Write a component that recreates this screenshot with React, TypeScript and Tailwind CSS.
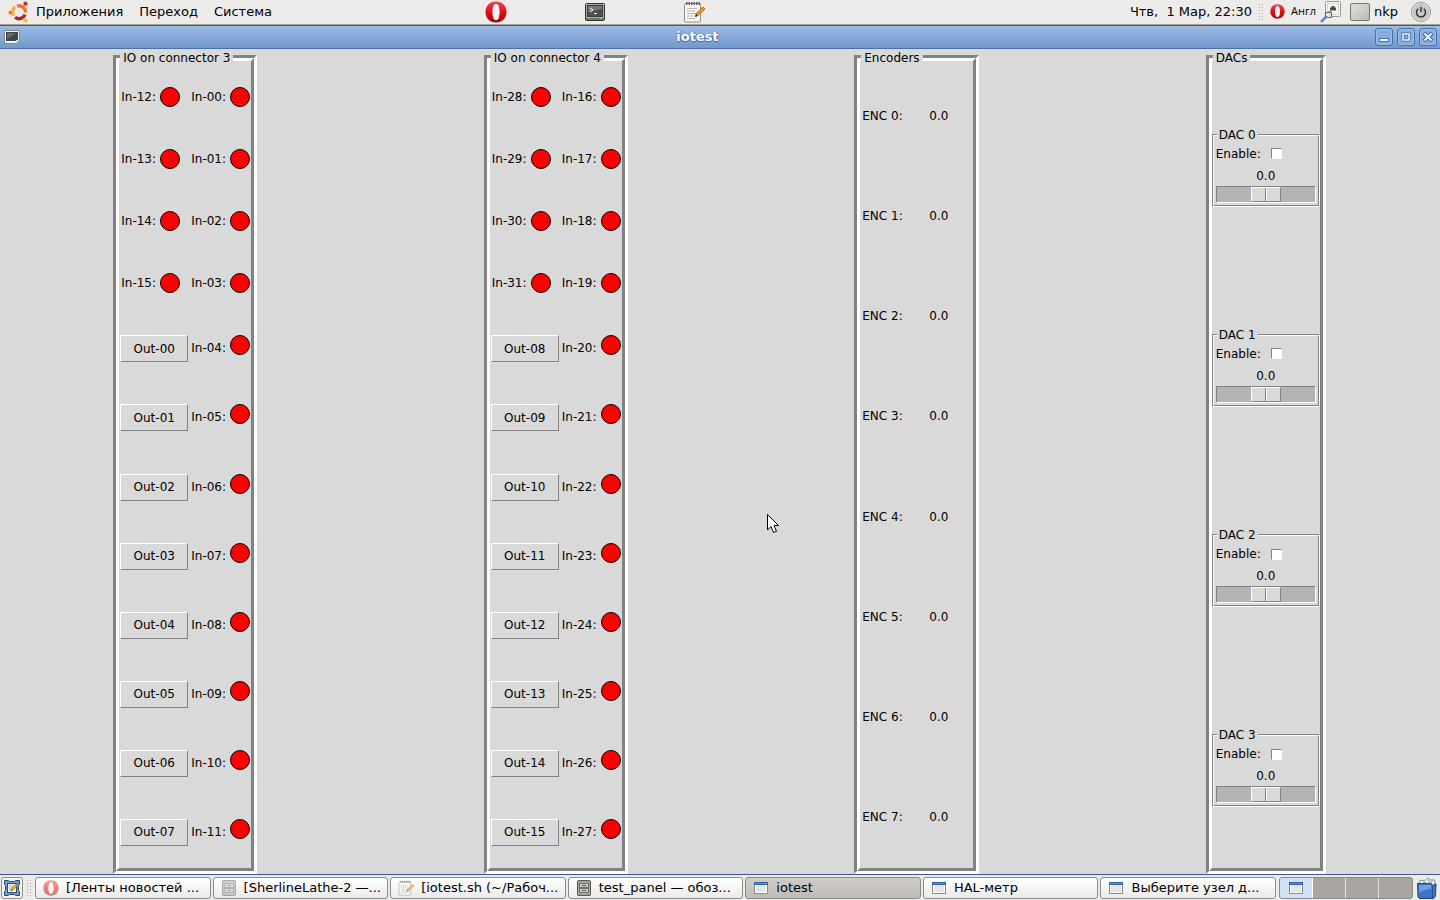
import type { ReactNode } from "react";

interface OutRow {
  out: string;
  input: string;
}

interface Connector {
  title: string;
  inputs: [string, string][];
  rows: OutRow[];
}

interface Task {
  label: string;
  icon: ReactNode;
  active?: boolean;
}

const pad = (n: number) => String(n).padStart(2, "0");

// each connector has 16 inputs and 8 outputs
const makeConnector = (title: string, inBase: number, outBase: number): Connector => ({
  title,
  inputs: [0, 1, 2, 3].map((i) => [`In-${pad(inBase + 12 + i)}`, `In-${pad(inBase + i)}`]),
  rows: [0, 1, 2, 3, 4, 5, 6, 7].map((i) => ({
    out: `Out-${pad(outBase + i)}`,
    input: `In-${pad(inBase + 4 + i)}`,
  })),
});

const CONNECTORS = [
  makeConnector("IO on connector 3", 0, 0),
  makeConnector("IO on connector 4", 16, 8),
];

/* ── Icons ── */

const UbuntuIcon = () => (
  <svg width="22" height="22" viewBox="0 0 22 22" fill="none" aria-hidden="true">
    <path d="M5.5 14.5A6.3 6.3 0 0 1 7 6.2" stroke="#f2ab2e" strokeWidth="3.4" />
    <path d="M9 5.2A6.3 6.3 0 0 1 17.5 11.5" stroke="#e8732c" strokeWidth="3.4" />
    <path d="M17 13.5A6.3 6.3 0 0 1 7 16.2" stroke="#b5242c" strokeWidth="3.4" />
    <circle cx="2.6" cy="11.6" r="2.2" fill="#e8732c" stroke="#f9c9a5" />
    <circle cx="17.4" cy="2.8" r="2.2" fill="#b5242c" stroke="#e3a3a3" />
    <circle cx="17.4" cy="19.4" r="2.2" fill="#f2b53a" stroke="#f7deb0" />
  </svg>
);

const OperaIcon = ({ size, faded }: { size: number; faded?: boolean }) => (
  <svg width={size} height={size} viewBox="0 0 22 22" opacity={faded ? 0.5 : 1} aria-hidden="true">
    <defs>
      <linearGradient id="opera" x1="0" y1="0" x2="0" y2="1">
        <stop offset="0" stopColor="#f0474a" />
        <stop offset="0.5" stopColor="#e30d15" />
        <stop offset="1" stopColor="#9d0a0f" />
      </linearGradient>
    </defs>
    <path
      d="M11 0.5C4.6 0.5 0.5 5 0.5 11S4.6 21.5 11 21.5 21.5 17 21.5 11 17.4 0.500 11 0.500ZM11 3C13.600 3 14.400 6.500 14.400 11S13.600 19 11 19 7.600 15.500 7.600 11 8.400 3 11 3Z"
      fill="url(#opera)"
      fillRule="evenodd"
    />
    <ellipse cx="11" cy="11" rx="3.4" ry="8" fill="#f6f4f3" />
  </svg>
);

const TerminalIcon = () => (
  <svg width="22" height="22" viewBox="0 0 22 22" fill="none" aria-hidden="true">
    <rect x="1.5" y="2.5" width="19" height="17" rx="1.5" fill="#3a3f40" stroke="#2e3436" />
    <rect x="2.5" y="3.5" width="17" height="13" stroke="#a9aca7" />
    <rect x="4" y="5" width="14" height="10" fill="#4a5051" />
    <path d="M4 5h14v3L4 11z" fill="#727877" />
    <path d="M6 7l3 2-3 2M10 12.5h3" stroke="#fff" />
    <path d="M2 18h18" stroke="#6c716d" strokeWidth="2" />
    <path d="M4 17.5h2M16 17.5h2" stroke="#8bd13c" />
  </svg>
);

const NotesIcon = ({ size, faded }: { size: number; faded?: boolean }) => (
  <svg width={size} height={size} viewBox="0 0 22 22" fill="none" opacity={faded ? 0.6 : 1} aria-hidden="true">
    <rect x="1.5" y="2.5" width="16" height="18.5" rx="1" fill="#f8f8f6" stroke="#8e908b" />
    <path d="M3 2.5h14" stroke="#60625e" strokeWidth="3" strokeDasharray="1.5 1" />
    <path d="M4 7.5h10M4 10h8M4 12.5h9M4 15h6M4 17.5h8" stroke="#b4b6b1" />
    <path d="M12.5 15.5l1-3.500 6.500-6 2 2-6.500 6z" fill="#f7941d" stroke="#b25b08" strokeWidth="0.8" />
    <path d="M12 16l1-3 2 2z" fill="#3b2b17" />
  </svg>
);

const CabinetIcon = ({ faded }: { faded?: boolean }) => (
  <svg width="16" height="18" viewBox="0 0 16 18" fill="none" opacity={faded ? 0.5 : 1} aria-hidden="true">
    <rect x="1.5" y="1.5" width="13" height="15" rx="1.5" fill="#a5a8a2" stroke="#555753" />
    <rect x="3.5" y="4.5" width="9" height="4" fill="#c9cbc6" stroke="#6c6e6a" />
    <rect x="3.5" y="9.5" width="9" height="4" fill="#c9cbc6" stroke="#6c6e6a" />
    <path d="M6 6.5h4M6 11.5h4" stroke="#5a5c58" />
  </svg>
);

const WindowIcon = () => (
  <svg width="14" height="12" viewBox="0 0 14 12" fill="none" aria-hidden="true">
    <rect x="0.5" y="0.5" width="13" height="11" fill="#e4e6e1" stroke="#8b8e88" />
    <rect x="1.5" y="2.5" width="11" height="8" stroke="#fff" />
    <rect width="14" height="3" fill="#2f63ab" />
    <path d="M1 1.5h12" stroke="#5d8ed0" />
  </svg>
);

const NetworkIcon = () => (
  <svg width="22" height="22" viewBox="0 0 22 22" fill="none" aria-hidden="true">
    <rect x="5.5" y="0.5" width="15" height="15" rx="1" fill="#f4f4f2" stroke="#9a9c97" />
    <rect x="7.5" y="2.5" width="11" height="11" stroke="#d5d6d2" />
    <path d="M10 9.5v-3h1.500V5h3v1.500H16v3z" fill="#4c4d35" />
    <path d="M1 21l6-6" stroke="#7ba3d6" strokeWidth="3" />
    <path d="M1 21l6-6" stroke="#3465a4" />
    <path d="M5.5 11.5h6v5h-3l-3-1z" fill="#e4e5e2" stroke="#5c5e5a" />
    <path d="M8 11l3-1.500v3" stroke="#888a85" />
  </svg>
);

const PowerIcon = () => (
  <svg width="22" height="22" viewBox="0 0 22 22" fill="none" aria-hidden="true">
    <circle cx="11" cy="11" r="9.5" fill="#ededeb" stroke="#8b8d88" />
    <circle cx="11" cy="11" r="7.5" fill="#c9cac7" stroke="#babbb7" />
    <path d="M8.3 7.8a4.5 4.5 0 1 0 5.4 0M11 6v5" stroke="#2c2e2b" strokeWidth="1.4" />
  </svg>
);

const DesktopIcon = () => (
  <svg width="18" height="18" viewBox="0 0 18 18" fill="none" aria-hidden="true">
    <path d="M1.5 1.5h4l1 1h5l1-1h4v4l-1 1v5l1 1v4h-4l-1-1h-5l-1 1h-4v-4l1-1v-5l-1-1z" fill="#6f9bd1" stroke="#204a87" />
    <rect x="4.5" y="4.5" width="9" height="9" fill="#f3f3ef" stroke="#3c4f63" />
    <path d="M6 7h4M6 9h3M6 11h3" stroke="#b4b6b1" />
    <path d="M8 12l1-3 4-4 1.5 1.5-4 4z" fill="#f5b52a" stroke="#8f5a08" strokeWidth="0.7" />
  </svg>
);

const TrashIcon = () => (
  <svg width="20" height="22" viewBox="0 0 20 22" fill="none" aria-hidden="true">
    <path d="M1.5 7l2-4 4 1 3-3 3 2h4l1 5z" fill="#eceeec" stroke="#7e8a96" />
    <path d="M6 5l3 1M11 3l2 3M15 4l-1 3" stroke="#8c959d" />
    <path d="M0.5 6.5h13l2 2 3.5-1.500-0.500 12-2 2.500h-14L1 20z" fill="#3a76c4" stroke="#1d4684" />
    <path d="M2 8h12v4c-4 0-8 1-11.500 4z" fill="#6e9fdc" />
    <path d="M15.5 9v12" stroke="#265396" />
  </svg>
);

const TASKS: Task[] = [
  { label: "[Ленты новостей ...", icon: <OperaIcon size={16} faded /> },
  { label: "[SherlineLathe-2 —...", icon: <CabinetIcon faded /> },
  { label: "[iotest.sh (~/Рабоч...", icon: <NotesIcon size={16} faded /> },
  { label: "test_panel — обоз...", icon: <CabinetIcon /> },
  { label: "iotest", icon: <WindowIcon />, active: true },
  { label: "HAL-метр", icon: <WindowIcon /> },
  { label: "Выберите узел д...", icon: <WindowIcon /> },
];

/* ── Panel widgets ── */

const Grip = () => (
  <span className="w-[6px] h-[18px] shrink-0 bg-[radial-gradient(#aaa8a5_1px,transparent_1px)] bg-[size:3px_3px]" />
);

const Led = () => (
  <svg width="20" height="20" viewBox="0 0 20 20" className="shrink-0" aria-hidden="true">
    <circle cx="10" cy="10" r="9.5" fill="#ff0000" stroke="#000" />
  </svg>
);

const GroupFrame = ({ title, width, children }: { title: string; width: string; children: ReactNode }) => (
  <fieldset
    className={`relative flex shrink-0 border-[3px] border-t-[#828282] border-l-[#828282] border-r-white border-b-white ${width}`}
  >
    <legend className="absolute -top-2 left-1 px-[3px] leading-4 whitespace-nowrap bg-[#d9d9d9]">
      {title}
    </legend>
    <div className="flex flex-col flex-1 pt-[5px] pb-px border-[3px] border-t-white border-l-white border-r-[#828282] border-b-[#828282]">
      {children}
    </div>
  </fieldset>
);

const InputLamp = ({ name }: { name: string }) => (
  <div className="flex items-center justify-between w-[60px] h-5 pl-px">
    <span>{name}:</span>
    <Led />
  </div>
);

const ConnectorFrame = ({ connector }: { connector: Connector }) => (
  <GroupFrame title={connector.title} width="w-36">
    {connector.inputs.map(([left, right]) => (
      <div key={left} className="flex items-center justify-between grow px-px">
        <InputLamp name={left} />
        <InputLamp name={right} />
      </div>
    ))}
    {connector.rows.map(({ out, input }) => (
      <div key={out} className="flex items-center grow px-px">
        <div className="flex justify-between flex-1 h-[27px]">
          <button
            type="button"
            className="w-[68px] border border-t-white border-l-white border-r-[#828282] border-b-[#828282] active:bg-[#ececec]"
          >
            {out}
          </button>
          <div className="flex justify-between w-[60px] pl-px">
            <span className="leading-[27px]">{input}:</span>
            <Led />
          </div>
        </div>
      </div>
    ))}
  </GroupFrame>
);

const DacFrame = ({ index }: { index: number }) => (
  <div className="flex items-center flex-1 pt-2">
    <fieldset className="relative w-full border border-t-[#828282] border-l-[#828282] border-r-white border-b-white">
      <legend className="absolute -top-2 left-1 px-0.5 leading-4 bg-[#d9d9d9]">DAC {index}</legend>
      <div className="px-0.5 pt-2 pb-0.5 border border-t-white border-l-white border-r-[#828282] border-b-[#828282]">
        <label className="flex items-center gap-2.5 leading-5">
          Enable:
          <input
            type="checkbox"
            className="appearance-none size-[11px] bg-white border border-t-[#828282] border-l-[#828282] border-r-white border-b-white checked:bg-[#b03060]"
          />
        </label>
        <label htmlFor={`dac-${index}`} className="block pt-0.5 text-center leading-5">
          0.0
        </label>
        <input
          id={`dac-${index}`}
          type="range"
          min={-10}
          max={10}
          step={0.1}
          defaultValue={0}
          className="block w-full h-[17px] appearance-none bg-[#b3b3b3] border border-t-[#828282] border-l-[#828282] border-r-white border-b-white [&::-webkit-slider-thumb]:appearance-none [&::-webkit-slider-thumb]:w-[30px] [&::-webkit-slider-thumb]:h-[15px] [&::-webkit-slider-thumb]:border [&::-webkit-slider-thumb]:border-t-white [&::-webkit-slider-thumb]:border-l-white [&::-webkit-slider-thumb]:border-r-[#828282] [&::-webkit-slider-thumb]:border-b-[#828282] [&::-webkit-slider-thumb]:bg-[linear-gradient(90deg,#d9d9d9_13px,#828282_13px,#828282_14px,#ffffff_14px,#ffffff_15px,#d9d9d9_15px)]"
        />
      </div>
    </fieldset>
  </div>
);

const TitleButton = ({ label, children }: { label: string; children: ReactNode }) => (
  <button
    type="button"
    aria-label={label}
    className="flex items-center justify-center size-[18px] rounded-[3px] border border-[#456fa8] bg-[#8aade0] shadow-[inset_0_0_0_1px_#9dbce6]"
  >
    <svg width="12" height="12" viewBox="0 0 12 12" fill="none" aria-hidden="true">
      {children}
    </svg>
  </button>
);

export default function App() {
  return (
    <div className="flex flex-col h-screen overflow-hidden bg-[#d9d9d9] text-black font-['DejaVu_Sans',sans-serif] text-[12px]">
      {/* ── Top panel ── */}
      <header className="flex items-center shrink-0 h-[25px] pl-2 pr-2 pb-px text-[13px] bg-[#edeceb] border-b border-[#a5a290]">
        <nav className="flex items-center gap-4">
          <button type="button" className="flex items-center gap-1.5">
            <UbuntuIcon />
            Приложения
          </button>
          <button type="button">Переход</button>
          <button type="button">Система</button>
        </nav>
        <div className="flex items-center gap-[77px] ml-[213px]">
          <button type="button" aria-label="Opera">
            <OperaIcon size={22} />
          </button>
          <button type="button" aria-label="Терминал">
            <TerminalIcon />
          </button>
          <button type="button" aria-label="Текстовый редактор">
            <NotesIcon size={22} />
          </button>
        </div>
        <div className="flex items-center ml-auto">
          <span className="mr-1.5 whitespace-pre">Чтв,  1 Мар, 22:30</span>
          <Grip />
          <span className="ml-1.5 mr-1.5">
            <OperaIcon size={15} />
          </span>
          <span className="mr-1 text-[11px] font-['Open_Sans',sans-serif]">Англ</span>
          <NetworkIcon />
          <span className="w-5 h-[18px] ml-2 mr-1 rounded-xs border border-[#747671] bg-linear-to-br from-[#dfe1dc] to-[#b9bcb5]" />
          <span className="mr-3">nkp</span>
          <button type="button" aria-label="Выключить">
            <PowerIcon />
          </button>
        </div>
      </header>

      {/* ── Window title ── */}
      <div className="flex items-center shrink-0 h-6 pl-1 pr-[3px] border-t border-t-[#3f5f85] border-b border-b-[#4972ab] bg-linear-to-b from-[#9bbbe6] to-[#7299cb]">
        <svg width="16" height="14" viewBox="0 0 16 14" fill="none" aria-hidden="true">
          <path d="M0.5 0.5h15v10l-3 3h-12z" fill="#f2f3f0" stroke="#888a85" />
          <rect x="2" y="2" width="12" height="9" fill="#3f4647" />
          <path d="M3 3h9L3 9z" fill="#656c6b" />
          <path d="M12 13v-3h3z" fill="#d3d7cf" />
        </svg>
        <h1 className="flex-1 text-center text-[13px] font-bold text-white [text-shadow:0_1px_1px_#3f689f,1px_0_1px_#3f689f]">
          iotest
        </h1>
        <div className="flex gap-1">
          <TitleButton label="Свернуть">
            <rect x="1.5" y="7.5" width="9" height="3" fill="#fff" stroke="#4a72ab" />
          </TitleButton>
          <TitleButton label="Развернуть">
            <rect x="3" y="3" width="6" height="6" stroke="#3f689f" strokeWidth="3" />
            <rect x="3" y="3" width="6" height="6" stroke="#f0f5fc" strokeWidth="1.5" />
          </TitleButton>
          <TitleButton label="Закрыть">
            <path d="M2 2l8 8M10 2l-8 8" stroke="#3f689f" strokeWidth="4" />
            <path d="M2.5 2.5l7 7M9.5 2.5l-7 7" stroke="#f0f5fc" strokeWidth="2" />
          </TitleButton>
        </div>
      </div>

      {/* ── Test window ── */}
      <main className="flex justify-around flex-1 min-h-0 pt-1.5 pr-px">
        {CONNECTORS.map((connector) => (
          <ConnectorFrame key={connector.title} connector={connector} />
        ))}

        <GroupFrame title="Encoders" width="w-[125px]">
          {[0, 1, 2, 3, 4, 5, 6, 7].map((i) => (
            <div key={i} className="flex items-center flex-1 pl-0.5">
              <span className="w-[67px]">ENC {i}:</span>
              <span>0.0</span>
            </div>
          ))}
        </GroupFrame>

        <GroupFrame title="DACs" width="w-[120px]">
          {[0, 1, 2, 3].map((i) => (
            <DacFrame key={i} index={i} />
          ))}
        </GroupFrame>
      </main>

      {/* ── Taskbar ── */}
      <footer className="flex items-center shrink-0 h-[26px] pl-px pr-[3px] text-[13px] bg-[#edeceb] border-t border-[#3b5a8c]">
        <button
          type="button"
          aria-label="Показать рабочий стол"
          className="flex items-center justify-center w-[22px] h-[22px] rounded-[3px] border border-[#8f8b87] bg-[#f6f5f4]"
        >
          <DesktopIcon />
        </button>
        <span className="flex mx-[3px]">
          <Grip />
        </span>
        <div className="flex flex-1 gap-0.5 min-w-0">
          {TASKS.map((task) => (
            <button
              key={task.label}
              type="button"
              className={`flex items-center flex-1 min-w-0 h-[22px] pl-[7px] rounded-[3px] border border-[#8f8b87] ${
                task.active ? "bg-linear-to-b from-[#cfccc9] to-[#bfbcb8]" : "bg-linear-to-b from-white to-[#ebeae9]"
              }`}
            >
              <span className="flex justify-center shrink-0 w-4 mr-[7px]">{task.icon}</span>
              <span className="whitespace-nowrap">{task.label}</span>
            </button>
          ))}
        </div>
        <div className="flex h-[22px] ml-[3px] mr-1 rounded-[3px] overflow-hidden border border-[#8f8b87] bg-[#a9a5a2]">
          <button
            type="button"
            aria-label="Рабочее место 1"
            className="flex items-center justify-center w-[33px] border-r border-white bg-[#d0e0f6]"
          >
            <WindowIcon />
          </button>
          <button type="button" aria-label="Рабочее место 2" className="w-[33px] border-r border-[#e4e2e0]" />
          <button type="button" aria-label="Рабочее место 3" className="w-[33px] border-r border-[#e4e2e0]" />
          <button type="button" aria-label="Рабочее место 4" className="w-[33px]" />
        </div>
        <button type="button" aria-label="Корзина">
          <TrashIcon />
        </button>
      </footer>

      {/* mouse pointer */}
      <svg
        width="14"
        height="22"
        viewBox="0 0 14 22"
        className="absolute left-[767px] top-[513px] pointer-events-none"
        aria-hidden="true"
      >
        <path d="M0.5 1.5v15.5l3.500-3.500 2.500 6 3-1.200-2.500-5.800h4.500z" fill="#fff" stroke="#000" />
      </svg>
    </div>
  );
}
